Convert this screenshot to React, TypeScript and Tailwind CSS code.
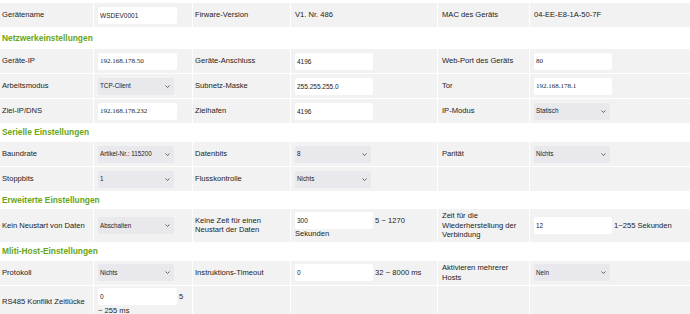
import React from 'react';

const SANS = "font-['Liberation_Sans',Arial,sans-serif]";

const Chevron = () => (
  <svg width="5" height="3" viewBox="0 0 5 3" className="shrink-0">
    <polyline points="0.5,0.5 2.5,2.5 4.5,0.5" fill="none" stroke="#555" strokeWidth="0.9" />
  </svg>
);

const Field: React.FC<{ value: string; serif?: boolean; w?: string }> = ({ value, serif, w = 'w-[79px]' }) => (
  <input
    defaultValue={value}
    readOnly
    className={`${w} h-[17px] bg-white rounded-[2px] px-[2px] text-[#222] outline-none align-middle ${
      serif ? "font-['Liberation_Serif',serif] text-[7px]" : `${SANS} text-[6.5px]`
    }`}
  />
);

const Select: React.FC<{ value: string }> = ({ value }) => (
  <div className="w-[76px] h-[17px] bg-[#e9e9ed] rounded-[2px] pl-[2px] pr-[4px] flex items-center justify-between text-[6.3px] text-[#222]">
    <span>{value}</span>
    <Chevron />
  </div>
);

const Label: React.FC<{ children?: React.ReactNode; pl?: string }> = ({ children, pl = 'pl-[2px]' }) => (
  <div className={`bg-[#f2f2f2] min-h-[24px] flex items-center ${pl} pr-[3px] py-[2px] leading-[9.5px]`}>
    {children}
  </div>
);

const Cell: React.FC<{ children?: React.ReactNode }> = ({ children }) => (
  <div className="bg-[#f2f2f2] min-h-[24px] flex items-center pl-[4px] pr-[2px] py-[2px] leading-[9.5px]">
    {children}
  </div>
);

const Header: React.FC<{ title: string; h?: string }> = ({ title, h = 'h-[16px]' }) => (
  <div className={`col-span-6 ${h} bg-white flex items-center pl-[2px] text-[8.4px] font-bold text-[#68a61a]`}>
    {title}
  </div>
);

export default function App() {
  return (
    <div className={`w-[690px] h-[314px] overflow-hidden bg-white pt-[3px] text-[7.6px] text-[#222] ${SANS}`}>
      <div className="grid grid-cols-[93px_98px_97px_146px_91px_1fr] gap-px">
        <Label>Gerätename</Label>
        <Cell><Field value="WSDEV0001" /></Cell>
        <Label>Firware-Version</Label>
        <Cell><span>V1. Nr. 486</span></Cell>
        <Label pl="pl-[4px]">MAC des Geräts</Label>
        <Cell><span>04-EE-E8-1A-50-7F</span></Cell>

        <Header title="Netzwerkeinstellungen" h="h-[20px]" />

        <Label>Geräte-IP</Label>
        <Cell><Field value="192.168.178.50" serif /></Cell>
        <Label>Geräte-Anschluss</Label>
        <Cell><Field value="4196" w="w-[78px]" /></Cell>
        <Label pl="pl-[4px]">Web-Port des Geräts</Label>
        <Cell><Field value="80" serif w="w-[78px]" /></Cell>

        <Label>Arbeitsmodus</Label>
        <Cell><Select value="TCP-Client" /></Cell>
        <Label>Subnetz-Maske</Label>
        <Cell><Field value="255.255.255.0" w="w-[78px]" /></Cell>
        <Label pl="pl-[4px]">Tor</Label>
        <Cell><Field value="192.168.178.1" serif w="w-[78px]" /></Cell>

        <Label>Ziel-IP/DNS</Label>
        <Cell><Field value="192.168.178.232" serif /></Cell>
        <Label>Zielhafen</Label>
        <Cell><Field value="4196" w="w-[78px]" /></Cell>
        <Label pl="pl-[4px]">IP-Modus</Label>
        <Cell><Select value="Statisch" /></Cell>

        <Header title="Serielle Einstellungen" h="h-[17px]" />

        <Label>Baundrate</Label>
        <Cell><Select value="Artikel-Nr.: 115200" /></Cell>
        <Label>Datenbits</Label>
        <Cell><Select value="8" /></Cell>
        <Label pl="pl-[4px]">Parität</Label>
        <Cell><Select value="Nichts" /></Cell>

        <Label>Stoppbits</Label>
        <Cell><Select value="1" /></Cell>
        <Label>Flusskontrolle</Label>
        <Cell><Select value="Nichts" /></Cell>
        <Label />
        <Cell />

        <Header title="Erweiterte Einstellungen" />

        <Label>Kein Neustart von Daten</Label>
        <Cell><Select value="Abschalten" /></Cell>
        <Label>Keine Zeit für einen Neustart der Daten</Label>
        <Cell>
          <div>
            <Field value="300" w="w-[78px]" /> 5 ~ 1270 Sekunden
          </div>
        </Cell>
        <Label pl="pl-[4px]">Zeit für die Wiederherstellung der Verbindung</Label>
        <Cell>
          <div>
            <Field value="12" w="w-[78px]" /> 1~255 Sekunden
          </div>
        </Cell>

        <Header title="Mliti-Host-Einstellungen" h="h-[17px]" />

        <Label>Protokoll</Label>
        <Cell><Select value="Nichts" /></Cell>
        <Label>Instruktions-Timeout</Label>
        <Cell>
          <div>
            <Field value="0" w="w-[78px]" /> 32 ~ 8000 ms
          </div>
        </Cell>
        <Label pl="pl-[4px]">Aktivieren mehrerer Hosts</Label>
        <Cell><Select value="Nein" /></Cell>

        <Label>RS485 Konflikt Zeitlücke</Label>
        <Cell>
          <div className="leading-[11px]">
            <Field value="0" /> 5 ~{'\u00a0'}255 ms
          </div>
        </Cell>
        <Label />
        <Cell />
        <Label />
        <Cell />
      </div>
    </div>
  );
}
